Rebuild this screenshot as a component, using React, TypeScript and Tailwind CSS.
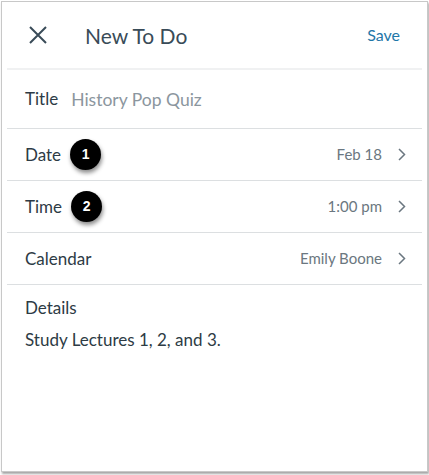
function Badge({ n }: { n: number }) {
  return (
    <span className="ml-[9px] flex h-[31px] w-[31px] items-center justify-center rounded-full bg-black text-[14px] font-bold text-white shadow-[1px_3px_4px_rgba(0,0,0,0.45)] [font-family:'Liberation_Sans',Arial,sans-serif]">
      {n}
    </span>
  );
}

function Chevron() {
  return (
    <svg width="8" height="13" viewBox="0 0 8 13" className="ml-[16px] text-[#6b7780]">
      <path d="M1 1l5.5 5.5L1 12" fill="none" stroke="currentColor" strokeWidth="1.5" />
    </svg>
  );
}

function Row({ label, value, badge }: { label: string; value: string; badge?: number }) {
  return (
    <div className="mx-[5px] flex h-[52px] items-center border-b border-[#dcdfe1] pl-[18px] pr-[16px]">
      <span className="text-[17px] text-[#2d3b45]">{label}</span>
      {badge && <Badge n={badge} />}
      <span className="ml-auto text-[15px] text-[#6b7780]">{value}</span>
      <Chevron />
    </div>
  );
}

export default function App() {
  return (
    <div className="h-[475px] w-[429px] bg-white [font-family:Lato,'Noto_Sans',sans-serif]">
      <div className="ml-[1px] mt-[1px] h-[471px] w-[427px] border border-[#c8c8c8] shadow-[1px_2px_2px_rgba(0,0,0,0.35)]">
        <div className="flex h-[66px] items-center pl-[27px] pr-[27px]">
          <svg width="18" height="18" viewBox="0 0 18 18" className="text-[#394b58]">
            <path d="M1 1l16 16M17 1L1 17" fill="none" stroke="currentColor" strokeWidth="2" />
          </svg>
          <span className="ml-[38px] mt-[1px] text-[21px] text-[#394b58]">New To Do</span>
          <span className="ml-auto text-[16px] text-[#1f77a8]">Save</span>
        </div>
        <div className="mx-[5px] h-[2px] bg-[#f0f1f2]" />
        <div className="mx-[5px] flex h-[59px] items-center border-b border-[#dcdfe1] pl-[18px]">
          <span className="text-[17px] text-[#2d3b45]">Title</span>
          <span className="ml-[13px] mt-[3px] text-[17.5px] text-[#8b969e]">History Pop Quiz</span>
        </div>
        <Row label="Date" value="Feb 18" badge={1} />
        <Row label="Time" value="1:00 pm" badge={2} />
        <Row label="Calendar" value="Emily Boone" />
        <div className="px-[23px] pt-[10px]">
          <div className="text-[17px] text-[#2d3b45]">Details</div>
          <div className="mt-[6px] text-[17px] text-[#2d3b45]">Study Lectures 1, 2, and 3.</div>
        </div>
      </div>
    </div>
  );
}
